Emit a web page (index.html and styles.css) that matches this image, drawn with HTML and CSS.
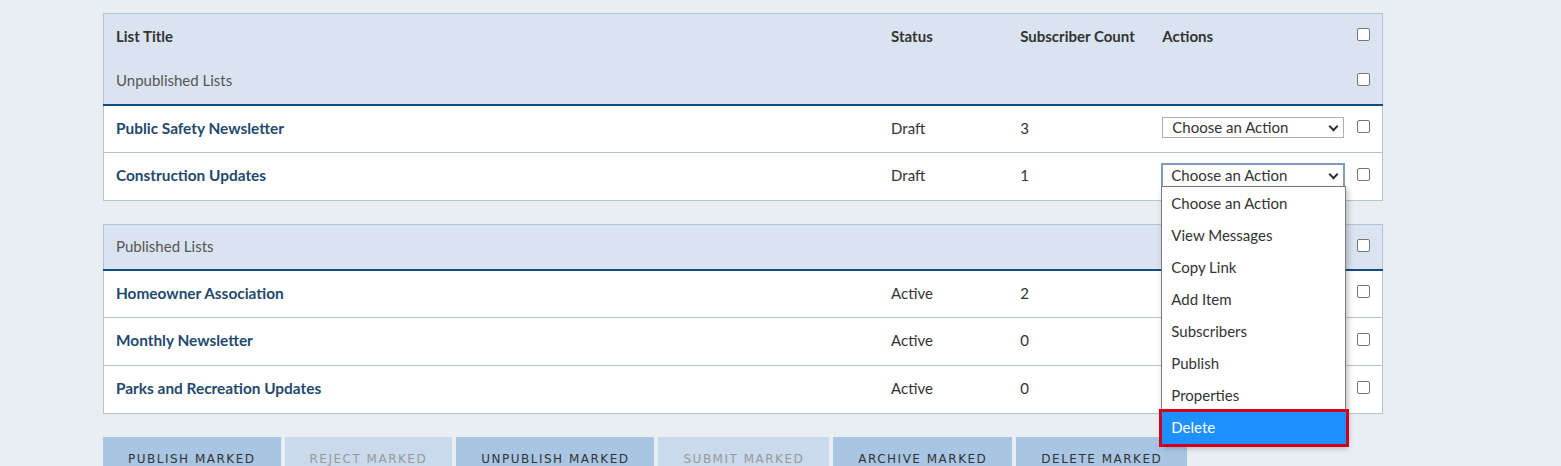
FILE: index.html
```html
<!DOCTYPE html>
<html>
<head>
<meta charset="utf-8">
<link rel="stylesheet" href="styles.css">
</head>
<body>
<div class="page">
  <table class="lists">
    <colgroup>
      <col class="c-title"><col class="c-status"><col class="c-count"><col class="c-actions"><col class="c-check">
    </colgroup>
    <thead>
      <tr class="hdr">
        <th>List Title</th><th>Status</th><th>Subscriber Count</th><th>Actions</th><th class="chk"><span class="cb"></span></th>
      </tr>
      <tr class="group">
        <th colspan="4">Unpublished Lists</th><th class="chk"><span class="cb"></span></th>
      </tr>
    </thead>
    <tbody>
      <tr>
        <td class="name">Public Safety Newsletter</td><td>Draft</td><td>3</td>
        <td><div class="select">Choose an Action<span class="arrow"></span></div></td>
        <td class="chk"><span class="cb"></span></td>
      </tr>
      <tr>
        <td class="name">Construction Updates</td><td>Draft</td><td>1</td>
        <td>
          <div class="select-wrap">
            <div class="select focused">Choose an Action<span class="arrow"></span></div>
            <ul class="menu">
              <li>Choose an Action</li>
              <li>View Messages</li>
              <li>Copy Link</li>
              <li>Add Item</li>
              <li>Subscribers</li>
              <li>Publish</li>
              <li>Properties</li>
              <li class="active">Delete</li>
            </ul>
          </div>
        </td>
        <td class="chk"><span class="cb"></span></td>
      </tr>
    </tbody>
  </table>

  <table class="lists second">
    <colgroup>
      <col class="c-title"><col class="c-status"><col class="c-count"><col class="c-actions"><col class="c-check">
    </colgroup>
    <thead>
      <tr class="group">
        <th colspan="4">Published Lists</th><th class="chk"><span class="cb"></span></th>
      </tr>
    </thead>
    <tbody>
      <tr>
        <td class="name">Homeowner Association</td><td>Active</td><td>2</td>
        <td><div class="select">Choose an Action<span class="arrow"></span></div></td>
        <td class="chk"><span class="cb"></span></td>
      </tr>
      <tr>
        <td class="name">Monthly Newsletter</td><td>Active</td><td>0</td>
        <td><div class="select">Choose an Action<span class="arrow"></span></div></td>
        <td class="chk"><span class="cb"></span></td>
      </tr>
      <tr>
        <td class="name">Parks and Recreation Updates</td><td>Active</td><td>0</td>
        <td><div class="select">Choose an Action<span class="arrow"></span></div></td>
        <td class="chk"><span class="cb"></span></td>
      </tr>
    </tbody>
  </table>

  <div class="buttons">
    <button class="btn">Publish Marked</button>
    <button class="btn disabled">Reject Marked</button>
    <button class="btn">Unpublish Marked</button>
    <button class="btn disabled">Submit Marked</button>
    <button class="btn">Archive Marked</button>
    <button class="btn">Delete Marked</button>
  </div>
</div>
</body>
</html>
```

FILE: styles.css
```css
html, body {
  margin: 0;
  padding: 0;
  background: #e9eef3;
}
body {
  font-family: Lato, "Open Sans", sans-serif;
  font-size: 15px;
  color: #333;
  overflow: hidden;
}
.page {
  padding: 13px 0 0 103px;
  width: 1280px;
}
.lists {
  width: 1280px;
  border-collapse: collapse;
  table-layout: fixed;
  background: #fff;
  border: 1px solid #b3c3d5;
}
.second {
  margin-top: 23px;
}
.c-title { width: 787px; }
.c-status { width: 129px; }
.c-count { width: 142px; }
.c-actions { width: 195px; }
.c-check { width: 25px; }

th, td {
  text-align: left;
  padding: 0 0 0 12px;
  vertical-align: middle;
}
th:not(:first-child), td:not(:first-child) {
  padding-left: 0;
}
thead th {
  background: #dae4f0;
}
.hdr th {
  height: 43px;
  font-weight: 700;
  font-size: 15px;
  color: #333;
  padding-bottom: 2px;
}
.group th {
  height: 42px;
  font-weight: 400;
  color: #555;
  border-bottom: 2px solid #0f4e82;
  padding-bottom: 3px;
}
.second .group th {
  height: 42px;
  padding-bottom: 2px;
}
tbody td {
  height: 44px;
  border-top: 1px solid #b3c3d5;
  padding-bottom: 3px;
}
tbody tr:first-child td {
  border-top: none;
  height: 43px;
}
.name {
  font-weight: 700;
  font-size: 15.4px;
  color: #1f4a6e;
}
.cb {
  display: block;
  width: 11px;
  height: 11px;
  border: 1px solid #767676;
  border-radius: 2px;
  background: #fff;
  margin-top: -2px;
}
.select {
  box-sizing: border-box;
  width: 182px;
  height: 21px;
  border: 1px solid #aab1ba;
  background: #fff;
  color: #333;
  padding: 0 0 0 9px;
  line-height: 19px;
  position: relative;
}
.select.focused {
  border: 2px solid #7d9cc0;
  margin-left: -1px;
  width: 184px;
  height: 25px;
  line-height: 21px;
  padding-left: 8px;
  margin-top: 1px;
}
.arrow {
  position: absolute;
  right: 6px;
  top: 5px;
  width: 5px;
  height: 5px;
  border-right: 2px solid #333;
  border-bottom: 2px solid #333;
  transform: rotate(45deg);
}
.focused .arrow {
  top: 6px;
}
.select-wrap {
  position: relative;
}
.menu {
  position: absolute;
  left: -1px;
  top: 23px;
  width: 183px;
  margin: 0;
  padding: 0;
  list-style: none;
  background: #fff;
  border: 1px solid #7a7a7a;
  border-bottom: none;
  box-shadow: 2px 3px 6px rgba(0, 0, 0, 0.25);
  z-index: 5;
}
.menu li {
  height: 32px;
  line-height: 32px;
  padding-left: 9px;
  color: #333;
}
.menu li.active {
  background: #1e90ff;
  color: #fff;
  outline: 3px solid #d0021b;
  outline-offset: -1px;
  margin-right: -2px;
  margin-left: -1px;
  padding-left: 10px;
  height: 34px;
  line-height: 33px;
}
.buttons {
  margin-top: 23px;
  display: flex;
  gap: 4px;
}
.btn {
  border: none;
  background: #a8c6e3;
  color: #333;
  font-family: "DejaVu Sans", sans-serif;
  font-size: 12px;
  letter-spacing: 1.5px;
  text-transform: uppercase;
  padding: 15px 25px 14px;
  height: 42px;
  cursor: pointer;
}
.btn.disabled {
  background: #c8daec;
  color: #999;
}
```
